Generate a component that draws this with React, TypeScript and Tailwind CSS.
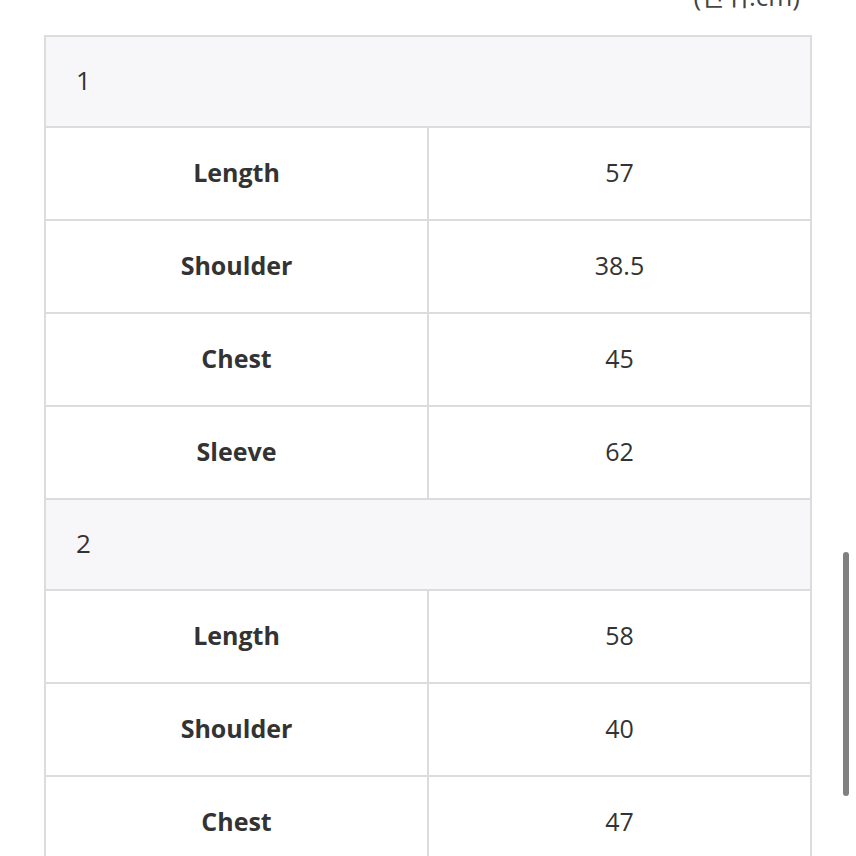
import React from "react";

const groups = [
  { title: "1", rows: [["Length", "57"], ["Shoulder", "38.5"], ["Chest", "45"], ["Sleeve", "62"]] },
  { title: "2", rows: [["Length", "58"], ["Shoulder", "40"], ["Chest", "47"], ["Sleeve", "63"]] },
];

export default function App() {
  return (
    <div
      className="relative h-[856px] w-[856px] overflow-hidden bg-white text-[#333333]"
      style={{ fontFamily: '"Open Sans", "Noto Sans", "Noto Sans CJK KR", sans-serif' }}
    >
      <div className="flex justify-end pr-[56px] mt-[-22px] h-[57px] text-[26px] leading-[36px] text-[#444]">
        (단위:cm)
      </div>
      <div className="px-[44px]">
        <table className="w-[768px] border-collapse border-2 border-[#dcdcdc] table-fixed">
          <tbody>
            {groups.map((g) => (
              <React.Fragment key={g.title}>
                <tr className="h-[91px] bg-[#f7f7f9]">
                  <td colSpan={2} className="border-2 border-[#dcdcdc] pl-[30px] pb-[3px] text-[26px]">
                    {g.title}
                  </td>
                </tr>
                {g.rows.map(([k, v]) => (
                  <tr key={g.title + k} className="h-[93px]">
                    <td className="w-[384px] border-2 border-[#dcdcdc] pb-[2px] text-center text-[25px] font-bold">
                      {k}
                    </td>
                    <td className="border-2 border-[#dcdcdc] pb-[2px] text-center text-[25px]">{v}</td>
                  </tr>
                ))}
              </React.Fragment>
            ))}
          </tbody>
        </table>
      </div>
      <div className="absolute left-[843px] top-[552px] h-[244px] w-[6px] rounded-full bg-[#808080]" />
    </div>
  );
}
